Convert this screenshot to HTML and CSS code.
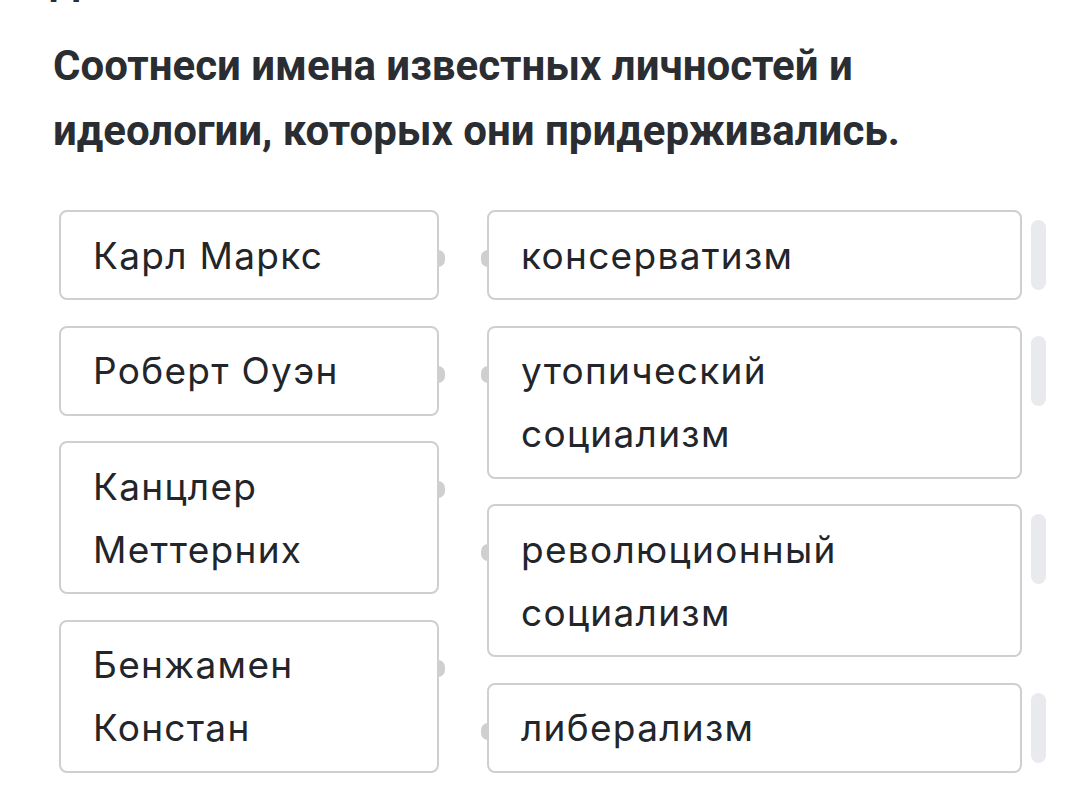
FILE: index.html
```html
<!DOCTYPE html>
<html lang="ru">
<head>
<meta charset="utf-8">
<link rel="stylesheet" href="styles.css">
</head>
<body>
<div class="page">
  <div class="prev">Д</div>
  <h1 class="title">Соотнеси имена известных личностей и идеологии, которых они придерживались.</h1>
  <div class="match">
    <div class="col col-left">
      <div class="card card-l"><span class="txt">Карл Маркс</span><i class="dot dot-r"></i></div>
      <div class="card card-l"><span class="txt">Роберт Оуэн</span><i class="dot dot-r"></i></div>
      <div class="card card-l tall"><span class="txt">Канцлер<br>Меттерних</span><i class="dot dot-r"></i></div>
      <div class="card card-l tall"><span class="txt">Бенжамен<br>Констан</span><i class="dot dot-r"></i></div>
    </div>
    <div class="col col-right">
      <div class="row">
        <div class="card card-r"><span class="txt">консерватизм</span><i class="dot dot-l"></i></div>
        <div class="handle"></div>
      </div>
      <div class="row">
        <div class="card card-r tall"><span class="txt">утопический<br>социализм</span><i class="dot dot-l"></i></div>
        <div class="handle"></div>
      </div>
      <div class="row">
        <div class="card card-r tall"><span class="txt">революционный<br>социализм</span><i class="dot dot-l"></i></div>
        <div class="handle"></div>
      </div>
      <div class="row">
        <div class="card card-r"><span class="txt">либерализм</span><i class="dot dot-l"></i></div>
        <div class="handle"></div>
      </div>
    </div>
  </div>
</div>
</body>
</html>
```
FILE: styles.css
```css
html, body {
  margin: 0;
  padding: 0;
  background: #ffffff;
}
.page {
  width: 1080px;
  height: 788px;
  overflow: hidden;
  font-family: Roboto, "Liberation Sans", sans-serif;
  color: #25282c;
}
.prev {
  font-weight: 700;
  font-size: 40px;
  line-height: 40px;
  height: 4px;
  margin-top: -38px;
  padding-left: 50px;
  color: #2a2d32;
}
.title {
  margin: 67px 0 0 0;
  padding: 0 0 0 53px;
  width: 900px;
  font-size: 42px;
  font-weight: 700;
  line-height: 65px;
  color: #2a2d32;
}
.match {
  display: flex;
  gap: 48px;
  margin-top: 47px;
  padding-left: 59px;
}
.col {
  display: flex;
  flex-direction: column;
  gap: 25.5px;
}
.col-left {
  width: 380px;
}
.col-right {
  width: 560px;
}
.row {
  display: flex;
  align-items: flex-start;
  gap: 9px;
}
.card {
  position: relative;
  box-sizing: border-box;
  border: 2px solid #cfcfd1;
  border-radius: 8px;
  background: #fff;
  padding: 11.5px 20px 11.5px 32px;
  font-family: Inter, Roboto, sans-serif;
  font-size: 37px;
  letter-spacing: 1.3px;
  line-height: 63px;
  color: #222529;
}
.card-l {
  width: 380px;
}
.card-r {
  width: 535px;
}
.dot {
  position: absolute;
  top: 38px;
  width: 7px;
  height: 17px;
  background: #cfcfd1;
}
.dot-r {
  right: -8px;
  border-radius: 0 9px 9px 0;
}
.dot-l {
  left: -8px;
  border-radius: 9px 0 0 9px;
}
.handle {
  width: 15px;
  height: 70px;
  margin-top: 10px;
  border-radius: 8px;
  background: #e8eaed;
}
```
